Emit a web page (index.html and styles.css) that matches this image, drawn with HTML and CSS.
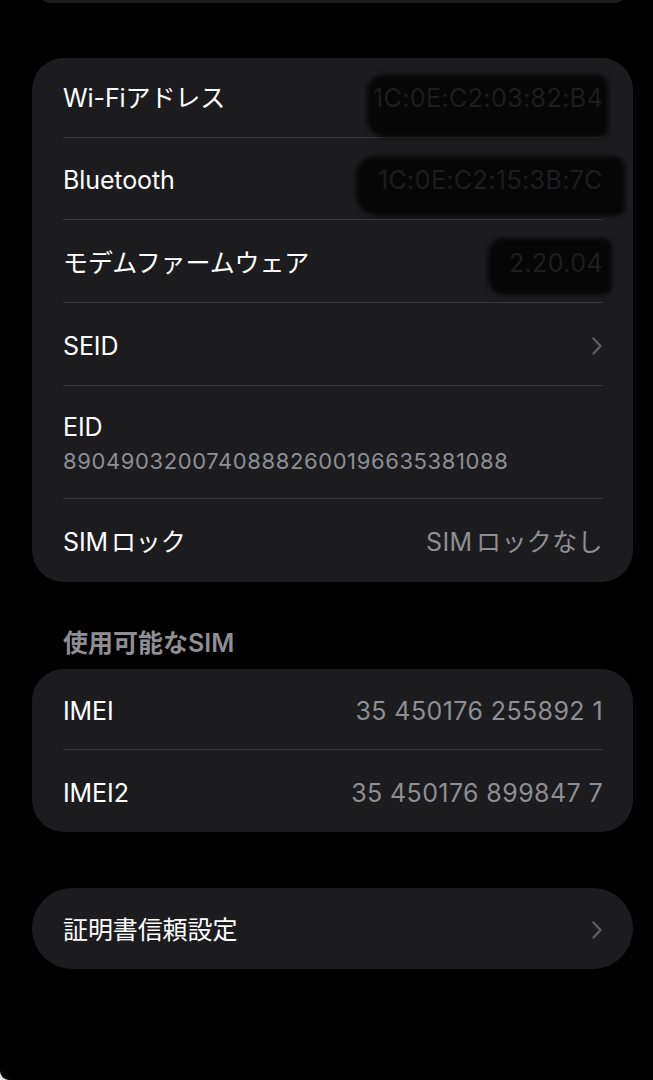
FILE: index.html
```html
<!DOCTYPE html>
<html lang="ja">
<head>
<meta charset="utf-8">
<title>情報</title>
<link rel="stylesheet" href="styles.css">
</head>
<body>
<main class="screen">
  <div class="card card-prev"></div>

  <section class="card card-info">
    <div class="row">
      <span class="label">Wi-Fiアドレス</span>
      <span class="value redact r1">1C:0E:C2:03:82:B4</span>
    </div>
    <div class="row">
      <span class="label">Bluetooth</span>
      <span class="value redact r2">1C:0E:C2:15:3B:7C</span>
    </div>
    <div class="row">
      <span class="label">モデムファームウェア</span>
      <span class="value redact r3">2.20.04</span>
    </div>
    <div class="row">
      <span class="label">SEID</span>
      <svg class="chevron" width="12" height="20" viewBox="0 0 12 20" aria-hidden="true"><path d="M2.5 2.5 L9.5 10 L2.5 17.5" fill="none" stroke="#5c5c60" stroke-width="2.4" stroke-linecap="round" stroke-linejoin="round"/></svg>
    </div>
    <div class="row row-tall">
      <span class="label">EID</span>
      <span class="sub">89049032007408882600196635381088</span>
    </div>
    <div class="row">
      <span class="label tight">SIM ロック</span>
      <span class="value tight">SIM ロックなし</span>
    </div>
  </section>

  <h2 class="section-title">使用可能なSIM</h2>

  <section class="card card-sim">
    <div class="row">
      <span class="label">IMEI</span>
      <span class="value">35 450176 255892 1</span>
    </div>
    <div class="row">
      <span class="label">IMEI2</span>
      <span class="value">35 450176 899847 7</span>
    </div>
  </section>

  <section class="card card-pill">
    <div class="row">
      <span class="label">証明書信頼設定</span>
      <svg class="chevron" width="12" height="20" viewBox="0 0 12 20" aria-hidden="true"><path d="M2.5 2.5 L9.5 10 L2.5 17.5" fill="none" stroke="#5c5c60" stroke-width="2.4" stroke-linecap="round" stroke-linejoin="round"/></svg>
    </div>
  </section>
</main>
</body>
</html>
```

FILE: styles.css
```css
html {
  background: #e8e8e8;
}

body {
  margin: 0;
  background: #000;
  min-height: 1080px;
  border-bottom-left-radius: 9px;
  overflow: hidden;
  font-family: Inter, "Noto Sans CJK JP", sans-serif;
  color: #fff;
}

.screen {
  padding: 0 20px 0 32px;
  display: flex;
  flex-direction: column;
}

.card {
  background: #1c1c1e;
  border-radius: 32px;
  margin-top: 55px;
}

.card-prev {
  height: 40px;
  margin-top: -37px;
}

.row {
  display: flex;
  align-items: center;
  justify-content: space-between;
  height: 83px;
  box-sizing: border-box;
  margin: 0 30px 0 31px;
  padding-top: 3px;
  border-bottom: 1.5px solid #38383a;
}

.card-info > .row:nth-child(1) {
  height: 80px;
  padding-top: 1px;
}

.card-info > .row:nth-child(2) {
  height: 82px;
}

.card-sim > .row:first-child {
  height: 81px;
  padding-top: 4px;
}

.card-sim > .row:last-child {
  height: 82px;
  padding-top: 4px;
}

.row:last-child {
  border-bottom: none;
}

.row-tall {
  height: 113px;
  flex-direction: column;
  align-items: flex-start;
  justify-content: center;
  gap: 5px;
  padding-top: 2px;
}

.label {
  font-size: 25px;
  line-height: 30px;
  letter-spacing: -0.1px;
}

.value {
  font-size: 25px;
  line-height: 30px;
  letter-spacing: 0.4px;
  color: #8e8e93;
}

.tight {
  word-spacing: -4px;
}

.sub {
  font-size: 22px;
  line-height: 28px;
  color: #8e8e93;
  letter-spacing: 0.6px;
}

.chevron {
  display: block;
}

.redact {
  position: relative;
  z-index: 0;
  color: #1d1d1f;
}

.redact::before {
  content: "";
  position: absolute;
  z-index: -1;
  background: #060606;
  filter: blur(2px);
}

.r1::before {
  left: -6px;
  right: -5px;
  top: -8px;
  bottom: -24px;
  border-radius: 16px 10px 8px 18px;
}

.r2::before {
  left: -22px;
  right: -22px;
  top: -9px;
  bottom: -21px;
  border-radius: 20px 12px 10px 22px;
}

.r3::before {
  left: -21px;
  right: -9px;
  top: -10px;
  bottom: -17px;
  border-radius: 16px 10px 8px 16px;
}

.section-title {
  margin: 46px 0 0 31px;
  font-size: 25px;
  line-height: 30px;
  font-weight: 600;
  color: #8e8e93;
}

.section-title + .card {
  margin-top: 11px;
}

.card-pill {
  margin-top: 56px;
  border-radius: 41px;
}

.card-pill .row {
  height: 81px;
  padding-top: 3px;
}
```
